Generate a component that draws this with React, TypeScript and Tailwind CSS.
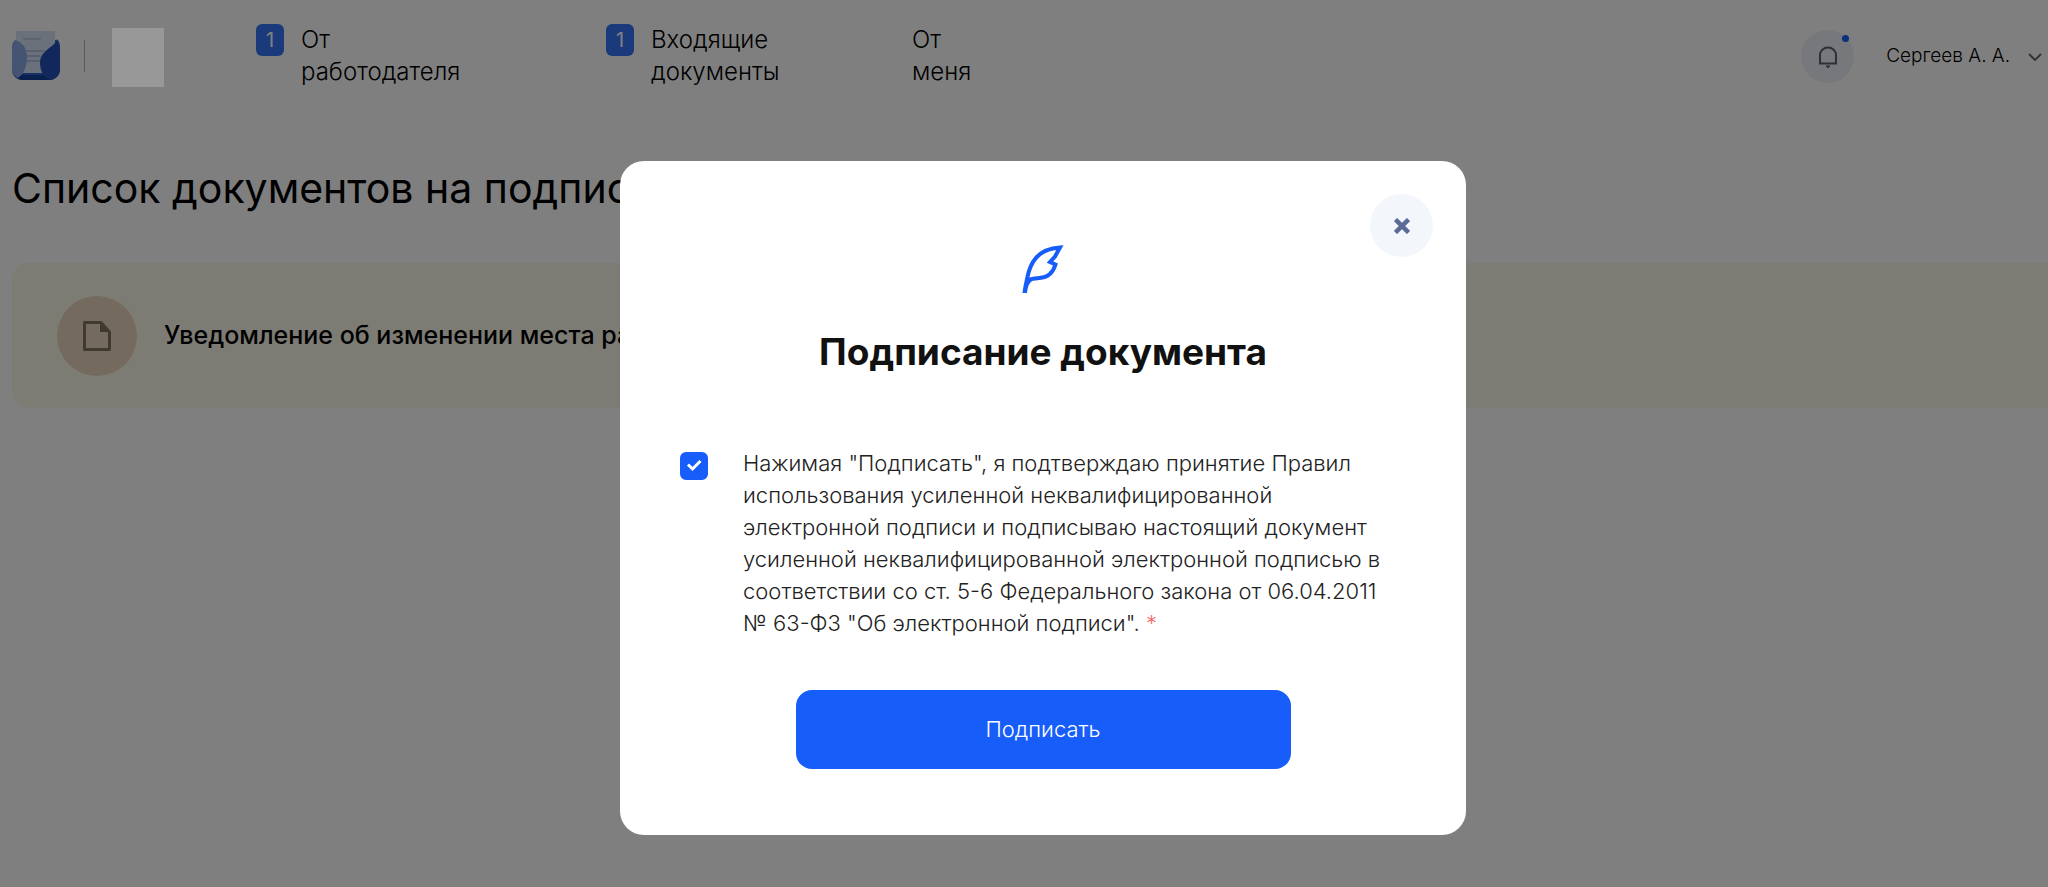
import React from 'react';

interface NavEntry {
    id: string;
    lines: [string, string];
    count?: number;
    className: string;
}

const navEntries: NavEntry[] = [
    { id: 'employer', lines: ['От', 'работодателя'], count: 1, className: 'w-[350px]' },
    { id: 'incoming', lines: ['Входящие', 'документы'], count: 1, className: 'w-[306px]' },
    { id: 'outgoing', lines: ['От', 'меня'], className: '' },
];

const Logo: React.FC = () => (
    <svg className="w-12 h-[50px]" viewBox="0 0 48 50" fill="none">
        <rect x="0" y="7" width="48" height="42" rx="10" fill="#2f62cc" />
        <path d="M2 44c2 3 5 5 9 5h26c4 0 7-2 9-5Z" fill="#12409f" />
        <path d="M4 0h39v15L32 42H9L4 15Z" fill="#d6e2f6" />
        <path d="M12 8h16" stroke="#b9c8e4" strokeWidth="2" strokeLinecap="round" />
        <path d="M14 20h18M14 25h15M14 30h14" stroke="#b2c2e2" strokeWidth="2" />
        <path d="M3 9c8 2 12 9 12 17 0 9-3 17-9 21C2 45 0 42 0 37V17c0-4 1-6 3-8Z" fill="#8aa9e6" />
        <path d="M45 8c2 2 3 5 3 9v20c0 7-4 11-11 12-6-4-9-10-9-17 0-6 3-10 8-14 4-3 8-6 9-10Z" fill="#2450b8" />
    </svg>
);

const BellIcon: React.FC = () => (
    <svg className="w-6 h-6" viewBox="0 0 24 24" fill="none" stroke="#5d6066" strokeWidth="2">
        <path d="M4 18V10a8 7.500 0 0 1 16 0V18" />
        <path d="M3 18.500h18" />
        <path d="M10 21h4l-2 2Z" fill="#5d6066" strokeWidth="1" />
    </svg>
);

const FileIcon: React.FC = () => (
    <svg className="w-7 h-[30px]" viewBox="0 0 28 30" fill="none">
        <path d="M1.500 1.500H18L26.500 11V28.500H1.500Z" stroke="#80735c" strokeWidth="3" strokeLinejoin="round" />
        <path d="M17 1l10 10H17Z" fill="#80735c" />
    </svg>
);

const FeatherIcon: React.FC = () => (
    <svg className="w-[42px] h-12" viewBox="0 0 42 48" fill="none">
        <path d="M5 34C8 18 15 4 38 2.500L33 11.500l-5 5.500 5.500 2.500C31 28 25 32.500 17.500 33 10 33.500 6 35 5 36Z" stroke="#165dfa" strokeWidth="4" />
        <path d="M3 36l5-2 2 2C7 38 5.500 42 5 48H0.500C1 43 2 39 3 34Z" fill="#165dfa" />
    </svg>
);

const Header: React.FC = () => (
    <header className="flex items-start pl-3 pr-[6px] h-[113px]">
        <a href="#" aria-label="Главная" className="mt-[31px]"><Logo /></a>
        <div className="w-px h-8 bg-[#b4b4b4] mt-10 ml-6" />
        <div className="relative z-20 w-[52px] h-[59px] bg-white/20 mt-7 ml-[27px]" />
        <nav className="flex ml-[92px] mt-6">
            {navEntries.map((entry) => (
                <a key={entry.id} href="#" className={`flex items-start gap-[17px] ${entry.className}`}>
                    {entry.count && (
                        <span className="w-7 h-8 rounded-md bg-[#3474f8] text-white text-xl font-normal flex items-center justify-center">{entry.count}</span>
                    )}
                    <span className="text-2xl leading-8 font-light">{entry.lines[0]}<br />{entry.lines[1]}</span>
                </a>
            ))}
        </nav>
        <div className="flex items-center ml-auto mt-[30px]">
            <button type="button" aria-label="Уведомления" className="relative w-[53px] h-[53px] rounded-full bg-[#eef1f7] flex items-center justify-center">
                <BellIcon />
                <span className="absolute top-[5px] right-[5px] w-[7px] h-[7px] rounded-full bg-[#165dfa]" />
            </button>
            <button type="button" className="flex items-center gap-[18px] ml-8 text-[19px] font-light">
                Сергеев А. А.
                <svg className="w-[14px] h-2" viewBox="0 0 14 8" fill="none" stroke="#6b6b6b" strokeWidth="2">
                    <path d="M1 1l6 6 6-6" />
                </svg>
            </button>
        </div>
    </header>
);

const SignDialog: React.FC = () => (
    <div role="dialog" aria-modal="true" aria-labelledby="sign-title" className="relative w-full max-w-[846px] rounded-3xl bg-white px-[60px] pt-[84px] pb-[66px] flex flex-col items-center">
        <button type="button" aria-label="Закрыть" className="absolute top-[33px] right-[33px] w-[63px] h-[63px] rounded-full bg-[#f3f7fb] flex items-center justify-center">
            <svg className="w-4 h-4" viewBox="0 0 16 16" stroke="#5b6b98" strokeWidth="4.5">
                <path d="M1.500 1.500l13 13M14.500 1.500l-13 13" />
            </svg>
        </button>
        <FeatherIcon />
        <h2 id="sign-title" className="mt-[35px] text-[37px] leading-12 font-bold text-[#111]">Подписание документа</h2>
        <div className="w-full flex items-start gap-[35px] mt-[71px]">
            <span className="relative mt-[5px] w-7 h-7 shrink-0">
                <input id="sign-consent" type="checkbox" defaultChecked className="appearance-none block w-7 h-7 rounded-md border-2 border-[#165dfa] checked:bg-[#165dfa]" />
                <svg className="absolute inset-0 w-7 h-7 pointer-events-none" viewBox="0 0 28 28" fill="none" stroke="#fff" strokeWidth="3">
                    <path d="M8 12.500l4.500 4.500L20.500 9" />
                </svg>
            </span>
            <label htmlFor="sign-consent" className="text-[22px] leading-8 font-light text-[#222] whitespace-nowrap">
                Нажимая "Подписать", я подтверждаю принятие Правил<br />
                использования усиленной неквалифицированной<br />
                электронной подписи и подписываю настоящий документ<br />
                усиленной неквалифицированной электронной подписью в<br />
                соответствии со ст. 5-6 Федерального закона от 06.04.2011<br />
                № 63-ФЗ "Об электронной подписи". <span className="text-[#f56c6c]">*</span>
            </label>
        </div>
        <button type="button" className="mt-[51px] w-full max-w-[495px] h-[79px] rounded-2xl bg-[#165dfa] text-white text-[22px] font-light">
            Подписать
        </button>
    </div>
);

const App: React.FC = () => (
    <div className="min-h-screen bg-white text-black font-[Inter,'Noto_Sans',sans-serif] overflow-hidden">
        <Header />
        <main className="pl-3">
            <h1 className="mt-[49px] text-[41px] leading-[52px] font-normal">Список документов на подпись</h1>
            <article className="mt-[49px] h-[145px] rounded-l-2xl bg-[#fbf9e8] flex items-center pl-[45px] gap-[27px]">
                <span className="w-20 h-20 rounded-full bg-[#e8d6bc] flex items-center justify-center">
                    <FileIcon />
                </span>
                <h3 className="text-[25px] font-medium">Уведомление об изменении места работы</h3>
            </article>
        </main>
        <div className="fixed inset-0 z-10 bg-black/50 flex items-start justify-center pl-[38px] pt-[161px]">
            <SignDialog />
        </div>
    </div>
);

export default App;
